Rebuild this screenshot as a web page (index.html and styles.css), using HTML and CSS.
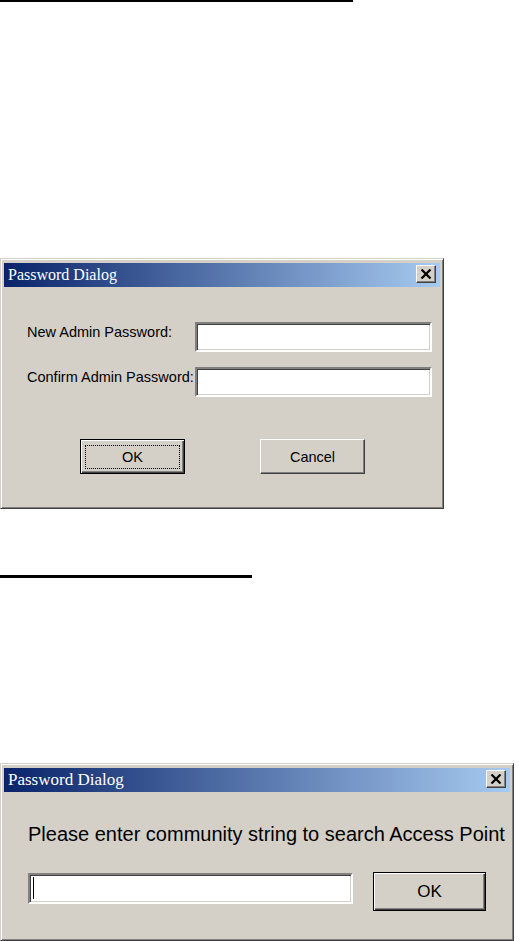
FILE: index.html
```html
<!DOCTYPE html>
<html lang="en">
<head>
    <meta charset="UTF-8">
    <meta name="viewport" content="width=device-width, initial-scale=1.0">
    <title>Password Dialog</title>
    <link rel="stylesheet" href="styles.css">
</head>
<body>
    <div class="rule rule-top"></div>

    <div class="window window-admin">
        <div class="titlebar">
            <span class="title">Password Dialog</span>
            <span class="close-btn">
                <svg width="12" height="10" viewBox="0 0 12 10"><path d="M1.5 0.5 L10.5 9.5 M10.5 0.5 L1.5 9.5" stroke="#000" stroke-width="2.2" fill="none"/></svg>
            </span>
        </div>
        <div class="admin-body">
            <div class="form-grid">
                <label class="field-label">New Admin Password:</label>
                <div class="field"></div>
                <label class="field-label">Confirm Admin Password:</label>
                <div class="field"></div>
            </div>
            <div class="button-row">
                <button class="btn btn-default btn-ok"><span class="focus-rect">OK</span></button>
                <button class="btn btn-cancel">Cancel</button>
            </div>
        </div>
    </div>

    <div class="rule rule-mid"></div>

    <div class="window window-community">
        <div class="titlebar">
            <span class="title">Password Dialog</span>
            <span class="close-btn">
                <svg width="12" height="10" viewBox="0 0 12 10"><path d="M1.5 0.5 L10.5 9.5 M10.5 0.5 L1.5 9.5" stroke="#000" stroke-width="2.2" fill="none"/></svg>
            </span>
        </div>
        <div class="community-body">
            <p class="prompt">Please enter community string to search Access Point</p>
            <div class="entry-row">
                <div class="field field-wide"><span class="caret"></span></div>
                <button class="btn btn-default btn-go">OK</button>
            </div>
        </div>
    </div>
</body>
</html>
```

FILE: styles.css
```css
html, body {
    margin: 0;
    padding: 0;
    height: 941px;
    overflow: hidden;
    background: #fff;
    font-family: "Liberation Sans", Arial, sans-serif;
    color: #000;
}
.rule {
    background: #000;
}
.rule-top {
    width: 353px;
    height: 2px;
}
.rule-mid {
    width: 252px;
    height: 3px;
    margin-top: 66px;
}
.window {
    box-sizing: border-box;
    background: #d4d0c8;
    border: 1px solid;
    border-color: #d4d0c8 #404040 #404040 #d4d0c8;
    box-shadow: inset 1px 1px #fff, inset -1px -1px #808080;
    padding: 4px 3px 3px 3px;
}
.window-admin {
    width: 444px;
    height: 251px;
    margin-top: 256px;
}
.window-community {
    width: 514px;
    height: 178px;
    margin-top: 185px;
}
.titlebar {
    height: 24px;
    display: flex;
    align-items: center;
    justify-content: space-between;
    background: linear-gradient(to right, #0a246a, #a6caf0);
    padding: 0 4px 0 4px;
}
.title {
    font-family: "Liberation Serif", "Times New Roman", serif;
    font-size: 16px;
    color: #fff;
}
.window-community .title {
    font-size: 17px;
}
.close-btn {
    box-sizing: border-box;
    width: 20px;
    height: 18px;
    margin-top: -2px;
    display: flex;
    align-items: center;
    justify-content: center;
    background: #d4d0c8;
    border: 1px solid;
    border-color: #fff #404040 #404040 #fff;
    box-shadow: inset -1px -1px #808080;
}
.admin-body {
    padding: 35px 0 0 23px;
}
.form-grid {
    display: grid;
    grid-template-columns: 168px 237px;
    row-gap: 15px;
    align-items: start;
}
.field-label {
    font-size: 14.5px;
    line-height: 17px;
    padding-top: 2px;
    white-space: nowrap;
}
.field {
    box-sizing: border-box;
    height: 30px;
    background: #fff;
    border: 2px solid;
    border-color: #808080 #fff #fff #808080;
    box-shadow: inset 1px 1px #404040, inset -1px -1px #d4d0c8;
}
.button-row {
    display: flex;
    gap: 75px;
    margin-top: 42px;
    padding-left: 53px;
}
.btn {
    box-sizing: border-box;
    height: 35px;
    margin: 0;
    font-family: "Liberation Sans", Arial, sans-serif;
    font-size: 14.5px;
    color: #000;
    background: #d4d0c8;
    border: 1px solid;
    border-color: #fff #404040 #404040 #fff;
    box-shadow: inset -1px -1px #808080;
    padding: 0;
}
.btn-default {
    border-color: #000;
    box-shadow: inset 1px 1px #fff, inset -1px -1px #404040, inset -2px -2px #808080;
}
.btn-ok {
    width: 105px;
    display: flex;
    padding: 5px 4px 4px 4px;
}
.focus-rect {
    flex: 1;
    display: flex;
    align-items: center;
    justify-content: center;
    border: 1px dotted #000;
}
.btn-cancel {
    width: 105px;
}
.community-body {
    padding: 31px 0 0 24px;
}
.prompt {
    margin: 0;
    font-size: 20px;
    line-height: 23px;
    white-space: nowrap;
}
.entry-row {
    display: flex;
    align-items: flex-start;
    gap: 20px;
    margin-top: 26px;
}
.field-wide {
    width: 325px;
    height: 31px;
    margin-top: 1px;
    padding: 2px 0 0 3px;
}
.caret {
    display: block;
    width: 1px;
    height: 22px;
    background: #000;
}
.btn-go {
    width: 113px;
    height: 39px;
    font-size: 17px;
}
```
